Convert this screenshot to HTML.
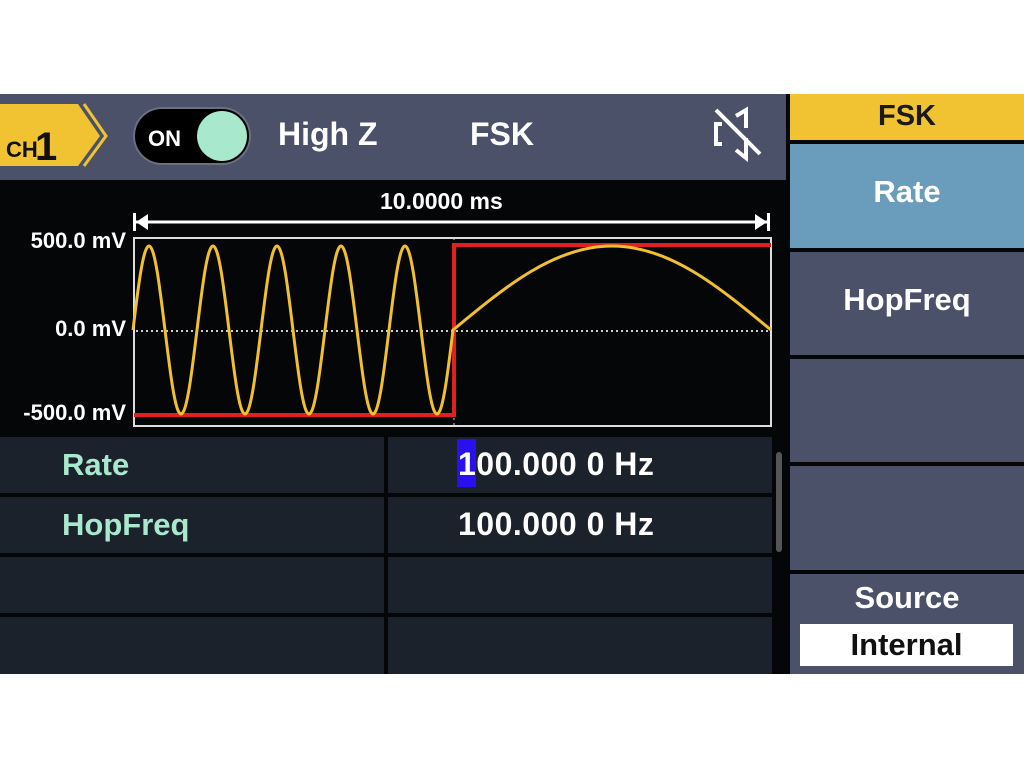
<!DOCTYPE html>
<html><head><style>
*{margin:0;padding:0;box-sizing:border-box}
body{width:1024px;height:768px;background:#fff;position:relative;overflow:hidden;font-family:"Liberation Sans","Noto Sans CJK SC",sans-serif;font-weight:bold}
.a{position:absolute}
.hdr{left:0;top:94px;width:786px;height:86px;background:#4a5168}
.t{color:#fff;font-size:32px;position:absolute}
.row{position:absolute;background:#1c222c}
.lbl{color:#a8e8cc;font-size:31px;position:absolute;left:62px}
.val{color:#fff;font-size:32px;position:absolute;left:458px;letter-spacing:0.5px}
.btn{position:absolute;left:790px;width:234px;background:#4a5168;color:#fff;font-size:31px;text-align:center}
.ax{position:absolute;right:898px;color:#fff;font-size:22px;white-space:nowrap}
</style></head><body>
<div class="a" style="left:0;top:94px;width:1024px;height:580px;background:#050608"></div>
<div class="a hdr"></div>
<svg class="a" style="left:0;top:94px" width="786" height="86">
<polygon points="0,10 78,10 100,42 78,72 0,72" fill="#f1c232"/>
<polyline points="84,10 106,42 84,72" fill="none" stroke="#f1c232" stroke-width="3"/>
<text x="6" y="63" font-family="Liberation Sans" font-weight="bold" font-size="22" fill="#111">CH</text>
<text x="35" y="66" font-family="Liberation Sans" font-weight="bold" font-size="40" fill="#111">1</text>
<rect x="134" y="14" width="116" height="56" rx="28" fill="#000" stroke="#6b7080" stroke-width="2"/>
<text x="148" y="52" font-family="Liberation Sans" font-weight="bold" font-size="22" fill="#fff">ON</text>
<circle cx="222" cy="42" r="25" fill="#a8e8cc"/>
<g stroke="#fff" stroke-width="4" fill="none">
<path d="M722,30 h-6 v20 h6"/>
<path d="M736,22 l10,-6 v18"/>
<path d="M746,44 v20 l-10,-8"/>
<path d="M716,16 L760,60"/>
</g>
</svg>
<div class="t" style="left:278px;top:116px">High Z</div>
<div class="t" style="left:470px;top:116px">FSK</div>
<div class="a" style="left:380px;top:188px;color:#fff;font-size:23px">10.0000 ms</div>
<div class="ax" style="top:228px">500.0 mV</div>
<div class="ax" style="top:316px">0.0 mV</div>
<div class="ax" style="top:400px">-500.0 mV</div>
<svg class="a" style="left:0;top:0" width="786" height="440">
<line x1="136" y1="222" x2="770" y2="222" stroke="#fff" stroke-width="3"/>
<rect x="133" y="213" width="3" height="18" fill="#fff"/>
<polygon points="136,222 148,214 148,230" fill="#fff"/>
<rect x="767" y="213" width="3" height="18" fill="#fff"/>
<polygon points="767,222 755,214 755,230" fill="#fff"/>
<rect x="134" y="238" width="637" height="188" fill="none" stroke="#ddd" stroke-width="2"/>
<line x1="136" y1="331" x2="770" y2="331" stroke="#ccc" stroke-width="2" stroke-dasharray="2,3"/>
<line x1="454" y1="238" x2="454" y2="426" stroke="#ccc" stroke-width="1" stroke-dasharray="2,3"/>
<polyline points="134,415 454,415 454,245 771,245" fill="none" stroke="#e02020" stroke-width="4"/>
<path d="M133,330 c5.35,-44.6 10.24,-84 16,-84 s10.65,40 16,84 s10.24,84 16,84 s10.65,-40 16,-84
 s10.24,-84 16,-84 s10.65,40 16,84 s10.24,84 16,84 s10.65,-40 16,-84
 s10.24,-84 16,-84 s10.65,40 16,84 s10.24,84 16,84 s10.65,-40 16,-84
 s10.24,-84 16,-84 s10.65,40 16,84 s10.24,84 16,84 s10.65,-40 16,-84
 s10.24,-84 16,-84 s10.65,40 16,84 s10.24,84 16,84 s10.65,-40 16,-84
 c53.1,-44 101.7,-84 159,-84 s105.9,40 159,84" fill="none" stroke="#f0c030" stroke-width="3"/>
</svg>
<div class="row" style="left:0;top:437px;width:384px;height:56px"></div>
<div class="row" style="left:388px;top:437px;width:384px;height:56px"></div>
<div class="row" style="left:0;top:497px;width:384px;height:56px"></div>
<div class="row" style="left:388px;top:497px;width:384px;height:56px"></div>
<div class="row" style="left:0;top:557px;width:384px;height:56px"></div>
<div class="row" style="left:388px;top:557px;width:384px;height:56px"></div>
<div class="row" style="left:0;top:617px;width:384px;height:57px"></div>
<div class="row" style="left:388px;top:617px;width:384px;height:57px"></div>
<div class="a" style="left:776px;top:452px;width:6px;height:100px;background:#555;border-radius:3px"></div>
<div class="lbl" style="top:447px">Rate</div>
<div class="lbl" style="top:507px">HopFreq</div>
<div class="a" style="left:457px;top:439px;width:19px;height:48px;background:#2a10f0"></div>
<div class="val" style="top:446px">100.000 0 Hz</div>
<div class="val" style="top:506px">100.000 0 Hz</div>
<div class="btn" style="top:94px;height:46px;background:#f1c232;color:#1a1a1a;line-height:44px;font-size:29px">FSK</div>
<div class="btn" style="top:144px;height:104px;background:#6a9cbc;line-height:96px">Rate</div>
<div class="btn" style="top:252px;height:103px;line-height:96px">HopFreq</div>
<div class="btn" style="top:359px;height:103px"></div>
<div class="btn" style="top:466px;height:104px"></div>
<div class="btn" style="top:574px;height:100px;line-height:48px">Source</div>
<div class="a" style="left:800px;top:624px;width:213px;height:42px;background:#fff;color:#111;font-size:31px;text-align:center;line-height:42px">Internal</div>
</body></html>
